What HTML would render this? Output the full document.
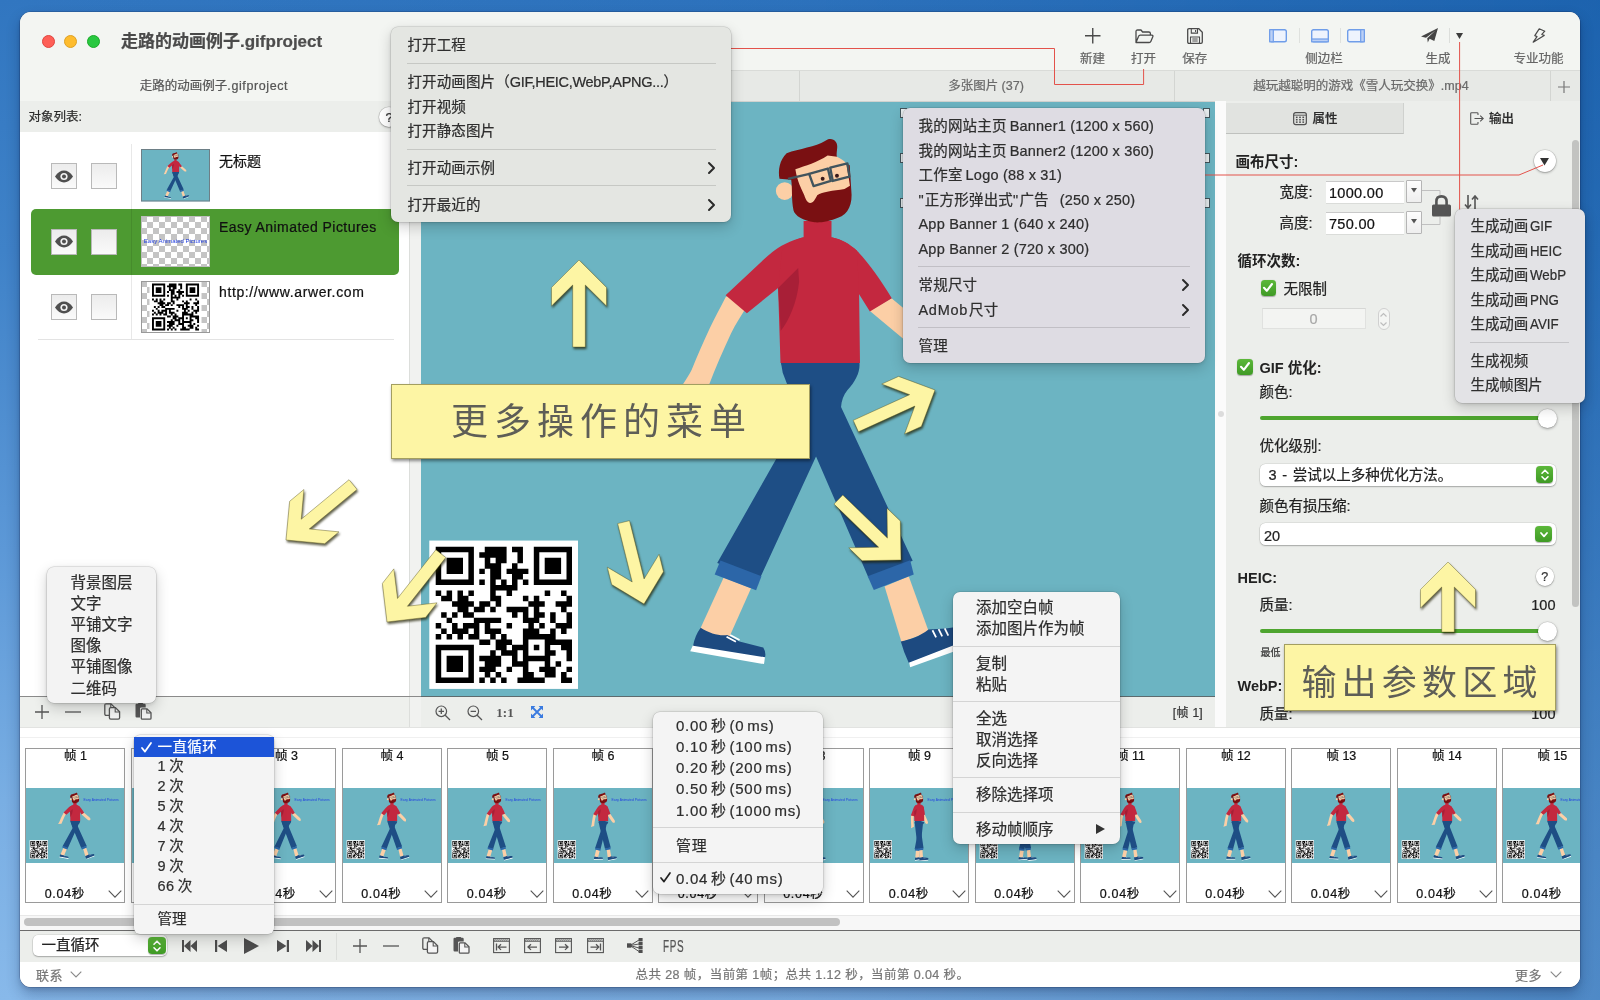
<!DOCTYPE html>
<html lang="zh"><head><meta charset="utf-8"><title>走路的动画例子.gifproject</title>
<style>
*{box-sizing:border-box;margin:0;padding:0}
html,body{width:1600px;height:1000px;overflow:hidden}
body{position:relative;font-family:"Liberation Sans","Noto Sans CJK SC",sans-serif;font-size:13px;color:#222;
background:linear-gradient(90deg,rgba(0,72,150,0) 0%,rgba(0,72,150,.1) 50%,rgba(0,72,150,.42) 100%),linear-gradient(180deg,#3176c0 0%,#3f82c8 25%,#5c98d7 55%,#79aee3 80%,#88b9ea 100%)}
.abs,.abs>*{position:absolute}
#win{position:absolute;left:20px;top:12px;width:1560px;height:975px;border-radius:11px;background:#eceeeb;overflow:hidden;
box-shadow:0 0 0 .5px rgba(0,0,30,.3),0 7px 14px rgba(5,25,70,.3),0 2px 5px rgba(5,25,70,.14)}
#win>*{position:absolute}
#win,#ov{will-change:transform}
.t{position:absolute;white-space:nowrap;line-height:1;transform:translateY(calc(-50% + .6px));-webkit-text-stroke:.22px currentColor}
.tc{transform:translate(-50%,calc(-50% + .6px))}
.tr{transform:translate(-100%,calc(-50% + .6px))}
.b{font-weight:bold;-webkit-text-stroke:0}
.menu{position:absolute;border-radius:7px;box-shadow:0 0 0 .5px rgba(0,0,0,.16),0 5px 14px rgba(0,0,0,.19),0 1px 4px rgba(0,0,0,.12)}
.menu .t{color:#2e2e2e}
.sep{position:absolute;height:1px;background:rgba(0,0,0,.13)}
.gbtn{position:absolute;border-radius:4px;background:linear-gradient(#5cb83a,#3f9a25);box-shadow:0 .5px 1px rgba(0,0,0,.3)}
.note{position:absolute;background:#fdf5a4;box-shadow:1px 2px 3px rgba(0,0,0,.45);color:#5e5e57;text-align:center;font-family:"Liberation Sans","Noto Sans CJK SC",sans-serif;font-weight:400;border:.5px solid rgba(90,85,40,.55)}
svg{position:absolute;overflow:visible}
.frame{position:absolute;top:748px;width:100px;height:155px;background:#fff;border:1px solid #9a9a9a}
.ico{stroke:#555;fill:none;stroke-width:1.3}
</style></head><body>
<div id="win">
<div style="left:0px;top:0px;width:1560px;height:58px;background:#f3f5f2"></div>
<div style="left:0px;top:58px;width:1560px;height:31.6px;background:#e7e9e6;border-top:1px solid #d9dbd8;border-bottom:1px solid #d0d2cf"></div>
<div style="left:0px;top:58px;width:389px;height:30.6px;background:#f3f5f2"></div>
<div style="left:389px;top:59px;width:1px;height:29.6px;background:#d3d5d2"></div>
<div style="left:779px;top:59px;width:1px;height:29.6px;background:#d3d5d2"></div>
<div style="left:1154px;top:59px;width:1px;height:29.6px;background:#d3d5d2"></div>
<div style="left:1530px;top:59px;width:1px;height:29.6px;background:#d3d5d2"></div>
<div style="left:21.5px;top:22.5px;width:13px;height:13px;border-radius:50%;background:#fe5f57;border:.5px solid #e0443e"></div>
<div style="left:44px;top:22.5px;width:13px;height:13px;border-radius:50%;background:#febc2e;border:.5px solid #dea123"></div>
<div style="left:66.5px;top:22.5px;width:13px;height:13px;border-radius:50%;background:#28c840;border:.5px solid #1aab29"></div>
<div class="t " style="left:101px;top:29px;font-size:17px;color:#4a4a4a"><span style="font-weight:700">走路的动画例子</span><span style="font-weight:700;color:#4c4c4c">.gifproject</span></div>
<div class="t tc" style="left:194px;top:74px;font-size:12.5px;color:#555">走路的动画例子<span style="letter-spacing:.6px">.gifproject</span></div>
<div class="t tc" style="left:966px;top:74px;font-size:12.5px;color:#6a6a6a">多张图片 (37)</div>
<div class="t tc" style="left:1341px;top:74px;font-size:12.5px;color:#6a6a6a">越玩越聪明的游戏《雪人玩交换》.mp4</div>
<svg style="left:1538px;top:69px" width="12" height="12"><path d="M6 0v12M0 6h12" stroke="#777" stroke-width="1.2"/></svg>
<div class="t tc" style="left:1072.5px;top:47px;font-size:12.5px;color:#666">新建</div>
<div class="t tc" style="left:1123.6px;top:47px;font-size:12.5px;color:#666">打开</div>
<div class="t tc" style="left:1174.7px;top:47px;font-size:12.5px;color:#666">保存</div>
<div class="t tc" style="left:1304px;top:47px;font-size:12.5px;color:#666">侧边栏</div>
<div class="t tc" style="left:1418px;top:47px;font-size:12.5px;color:#666">生成</div>
<div class="t tc" style="left:1518.5px;top:47px;font-size:12.5px;color:#666">专业功能</div>
<svg style="left:1065px;top:16px" width="15.5" height="15.5" viewBox="0 0 15.5 15.5" ><path d="M7.75 0v15.5M0 7.75h15.5" stroke="#4a4a4a" stroke-width="1.4" fill="none"/></svg>
<svg style="left:1114.5px;top:16.5px" width="19" height="15" viewBox="0 0 19 15" ><path d="M1 13.5V2.6Q1 1 2.6 1H6l1.6 2h6.2q1.6 0 1.6 1.6V6.2M1 13.5l2.6-6.2q.4-1.1 1.6-1.1h11.6q1.6 0 1 1.5l-2 4.8q-.4 1-1.6 1z" stroke="#4a4a4a" stroke-width="1.3" fill="none" stroke-linejoin="round"/></svg>
<svg style="left:1167px;top:16px" width="16" height="16" viewBox="0 0 16 16" ><path d="M.7 2Q.7.7 2 .7H11.8L15.3 4.2V14Q15.3 15.3 14 15.3H2Q.7 15.3.7 14z" stroke="#4a4a4a" stroke-width="1.3" fill="none"/><path d="M4.3.9v4.2h6.2V.9M8.6 2v2M3.5 15.2V9h9v6.2M5.3 11h5.4M5.3 13h5.4" stroke="#4a4a4a" stroke-width="1.1" fill="none"/></svg>
<svg style="left:1249px;top:17px" width="18" height="13.5" viewBox="0 0 18 13.5" ><rect x=".7" y=".7" width="16.6" height="12.1" rx="1.8" fill="#eef3fd" stroke="#6f9de9" stroke-width="1.4"/><rect x=".7" y=".7" width="3.6" height="12.1" fill="#bcd0f5" stroke="#6f9de9" stroke-width="1.2"/></svg>
<svg style="left:1290.5px;top:17px" width="18" height="13.5" viewBox="0 0 18 13.5" ><rect x=".7" y=".7" width="16.6" height="12.1" rx="1.8" fill="#eef3fd" stroke="#6f9de9" stroke-width="1.4"/><rect x=".7" y="10" width="16.6" height="2.8" fill="#bcd0f5" stroke="#6f9de9" stroke-width="1.2"/></svg>
<svg style="left:1327px;top:17px" width="18" height="13.5" viewBox="0 0 18 13.5" ><rect x=".7" y=".7" width="16.6" height="12.1" rx="1.8" fill="#eef3fd" stroke="#6f9de9" stroke-width="1.4"/><rect x="13.7" y=".7" width="3.6" height="12.1" fill="#bcd0f5" stroke="#6f9de9" stroke-width="1.2"/></svg>
<div style="left:1278.5px;top:16px;width:1px;height:15px;background:#dfe1de"></div>
<div style="left:1320px;top:16px;width:1px;height:15px;background:#dfe1de"></div>
<svg style="left:1400.5px;top:15.5px" width="17" height="15" viewBox="0 0 17 15" ><path d="M0 8.6L17 0 13.3 13 8.6 10.8 6.8 14.6 6.2 10.2 14.5 2.4 5 9.8z" fill="#454545"/></svg>
<div style="left:1429.3px;top:16px;width:1px;height:15px;background:#dcdedb"></div>
<svg style="left:1436px;top:21px" width="7" height="6" viewBox="0 0 7 6" ><path d="M0 0h7L3.5 6z" fill="#3c3c3c"/></svg>
<svg style="left:1512px;top:16px" width="14" height="15" viewBox="0 0 14 15" ><path d="M7.2.8L12.8 3.2 9.8 6.4 12.2 7.4 1.2 14.2 5 8.6 2.8 7.6z" fill="none" stroke="#4a4a4a" stroke-width="1.2" stroke-linejoin="round"/></svg>
<div style="left:0px;top:89px;width:389px;height:31px;background:#eceeeb"></div>
<div class="t " style="left:8.5px;top:105px;font-size:12.5px;color:#2a2a2a">对象列表:</div>
<div style="left:359px;top:95px;width:20px;height:20px;border-radius:50%;background:#fff;box-shadow:0 0 0 .5px rgba(0,0,0,.18),0 1px 2px rgba(0,0,0,.25)"></div>
<div class="t tc" style="left:369px;top:104.5px;font-size:13px;color:#333">?</div>
<div style="left:0px;top:120px;width:389px;height:564px;background:#fff"></div>
<div style="left:389px;top:89px;width:1px;height:626px;background:#dcdedb"></div>
<div style="left:390px;top:89px;width:11px;height:626px;background:#f1f2f0"></div>
<div style="left:0px;top:684px;width:401px;height:1px;background:#8a8a8a"></div>
<div style="left:0px;top:685px;width:389px;height:30px;background:#eef0ed"></div>
<div style="left:10.5px;top:197px;width:368px;height:65.5px;background:#4d9a31;border-radius:5px"></div>
<div style="left:111px;top:132px;width:1px;height:195px;background:rgba(0,0,0,.09)"></div>
<div style="left:18px;top:327px;width:356px;height:1px;background:#e3e3e3"></div>
<div style="left:31px;top:151px;width:26px;height:26px;background:linear-gradient(#ececec,#fafafa);border:1px solid #b9b9b9"></div>
<div style="left:71px;top:151px;width:26px;height:26px;background:linear-gradient(#ececec,#fafafa);border:1px solid #b9b9b9"></div>
<svg style="left:34px;top:157.5px" width="20" height="13" viewBox="0 0 20 13" ><path d="M1 6.5Q5 0.6 10 0.6T19 6.5Q15 12.4 10 12.4T1 6.5z" fill="#4f4f4f"/><circle cx="10" cy="6.5" r="3.6" fill="#f4f4f4"/><circle cx="10" cy="6.5" r="2" fill="#4f4f4f"/></svg>
<div class="t " style="left:199px;top:148.2px;font-size:14px;color:#111;letter-spacing:0px">无标题</div>
<div style="left:31px;top:216.5px;width:26px;height:26px;background:linear-gradient(#ececec,#fafafa);border:1px solid #b9b9b9"></div>
<div style="left:71px;top:216.5px;width:26px;height:26px;background:linear-gradient(#ececec,#fafafa);border:1px solid #b9b9b9"></div>
<svg style="left:34px;top:223px" width="20" height="13" viewBox="0 0 20 13" ><path d="M1 6.5Q5 0.6 10 0.6T19 6.5Q15 12.4 10 12.4T1 6.5z" fill="#4f4f4f"/><circle cx="10" cy="6.5" r="3.6" fill="#f4f4f4"/><circle cx="10" cy="6.5" r="2" fill="#4f4f4f"/></svg>
<div class="t " style="left:199px;top:213.7px;font-size:14px;color:#111;letter-spacing:0.45px">Easy Animated Pictures</div>
<div style="left:31px;top:282px;width:26px;height:26px;background:linear-gradient(#ececec,#fafafa);border:1px solid #b9b9b9"></div>
<div style="left:71px;top:282px;width:26px;height:26px;background:linear-gradient(#ececec,#fafafa);border:1px solid #b9b9b9"></div>
<svg style="left:34px;top:288.5px" width="20" height="13" viewBox="0 0 20 13" ><path d="M1 6.5Q5 0.6 10 0.6T19 6.5Q15 12.4 10 12.4T1 6.5z" fill="#4f4f4f"/><circle cx="10" cy="6.5" r="3.6" fill="#f4f4f4"/><circle cx="10" cy="6.5" r="2" fill="#4f4f4f"/></svg>
<div class="t " style="left:199px;top:279.2px;font-size:14px;color:#111;letter-spacing:0.62px">http://www.arwer.com</div>
<svg width="0" height="0" style="left:0;top:0"><defs>
<g id="legB" transform="translate(620 340) scale(.36)">
 <path d="M447 60L602 60L612 175L388 662L270 618L500 212L464 120L452 89Z" fill="#1e4e85"/>
 <path d="M288 658L364 688L300 832L222 803Z" fill="#fccfa6"/>
 <path d="M279 611L393 655L378 694L263 650Z" fill="#2c66a8"/>
 <path d="M203 846L403 878L400 899L195 863Z" fill="#fff"/>
 <path d="M224 798C250 815 280 822 298 818L332 836L398 853Q406 866 403 880L203 848Q208 820 224 798Z" fill="#1d4a80"/>
 <path d="M296 823l26 14M306 818l26 14" stroke="#fff" stroke-width="5"/>
</g><g id="legF" transform="translate(620 340) scale(.36)">
 <path d="M735 683L802 655L858 810L782 838Z" fill="#fccfa6"/>
 <path d="M803 893L985 822L990 842L806 908Z" fill="#fff"/>
 <path d="M780 836C805 832 832 822 857 803L905 800L975 790Q990 805 986 824L802 895Q788 866 780 836Z" fill="#1d4a80"/>
 <path d="M868 805l10 20M885 802l10 20M902 800l10 20" stroke="#fff" stroke-width="5"/>
 <path d="M447 60L665 60C668 85 655 112 632 137C621 150 615 168 614 184L813 612L690 658L485 184L447 60Z" fill="#1e4e85"/>
 <path d="M688 655L806 610L816 650L705 693Z" fill="#2c66a8"/>
</g><g id="armL" transform="translate(620 100) scale(.3)"><path d="M352 655Q372 636 392 648Q414 660 420 690C402 720 385 745 370 776C345 830 318 890 295 952L203 955C220 930 232 912 239 897C258 850 280 800 300 757C318 720 334 690 352 655Z" fill="#fccfa6"/><path d="M527 624L423 708L352 648L480 528C520 490 560 468 612 455L620 600Z" fill="#c3283f"/></g><g id="armR" transform="translate(620 100) scale(.3)"><path d="M832 700L905 658L1040 770Q1090 800 1075 850Q1040 870 1000 840Z" fill="#fccfa6"/><path d="M705 455C740 462 765 478 790 500C830 540 870 600 906 658L833 702L797 645L700 600Z" fill="#c3283f"/></g><g id="upper"><g transform="translate(620 100) scale(.3)">
 <path d="M612 400L705 400L705 455C740 462 765 478 790 500L797 645L800 874L535 874L527 624L540 500C560 475 585 462 612 455Z" fill="#c3283f"/>
 <path d="M594 557L527 624L536 767C562 734 590 673 597 603Z" fill="#a81f37"/>
</g>
<g transform="translate(760 120) scale(.13)">
 <circle cx="190" cy="540" r="68" fill="#fccfa6"/>
 <path d="M150 445C138 380 150 300 205 248C300 215 430 200 500 155C545 118 605 150 593 215C590 250 585 270 600 295L690 340L702 530C715 640 680 720 600 745C540 772 460 785 420 780C330 770 270 730 258 690C240 600 250 520 240 452Z" fill="#7a1012"/>
 <path d="M272 372C350 345 440 320 520 266L592 276C615 290 645 300 665 330L692 498L650 524C560 538 480 545 440 572C425 600 412 632 386 632C360 626 350 600 340 570C318 520 288 470 272 372Z" fill="#fccfa6"/>
 <g fill="none" stroke="#41545d" stroke-width="18" stroke-linejoin="round"><path d="M378 408L522 366L545 462L412 502Z"/><path d="M540 360L672 326L688 428L560 462Z"/><path d="M215 445L380 408"/></g>
 <circle cx="482" cy="445" r="15" fill="#3a1a1a"/><circle cx="592" cy="422" r="15" fill="#3a1a1a"/>
</g></g>
<g id="qrg"><rect x="429.3" y="540" width="148.7" height="148.5" fill="#fff"/><path d="M435.70 546.30h38.20v5.50h-38.20zM484.75 546.30h21.85v5.50h-21.85zM512.00 546.30h10.95v5.50h-10.95zM533.80 546.30h38.20v5.50h-38.20zM435.70 551.75h5.50v5.50h-5.50zM468.40 551.75h5.50v5.50h-5.50zM479.30 551.75h27.30v5.50h-27.30zM517.45 551.75h5.50v5.50h-5.50zM533.80 551.75h5.50v5.50h-5.50zM566.50 551.75h5.50v5.50h-5.50zM435.70 557.20h5.50v5.50h-5.50zM446.60 557.20h16.40v5.50h-16.40zM468.40 557.20h5.50v5.50h-5.50zM484.75 557.20h5.50v5.50h-5.50zM495.65 557.20h10.95v5.50h-10.95zM517.45 557.20h5.50v5.50h-5.50zM533.80 557.20h5.50v5.50h-5.50zM544.70 557.20h16.40v5.50h-16.40zM566.50 557.20h5.50v5.50h-5.50zM435.70 562.65h5.50v5.50h-5.50zM446.60 562.65h16.40v5.50h-16.40zM468.40 562.65h5.50v5.50h-5.50zM484.75 562.65h16.40v5.50h-16.40zM512.00 562.65h5.50v5.50h-5.50zM533.80 562.65h5.50v5.50h-5.50zM544.70 562.65h16.40v5.50h-16.40zM566.50 562.65h5.50v5.50h-5.50zM435.70 568.10h5.50v5.50h-5.50zM446.60 568.10h16.40v5.50h-16.40zM468.40 568.10h5.50v5.50h-5.50zM479.30 568.10h5.50v5.50h-5.50zM490.20 568.10h10.95v5.50h-10.95zM506.55 568.10h21.85v5.50h-21.85zM533.80 568.10h5.50v5.50h-5.50zM544.70 568.10h16.40v5.50h-16.40zM566.50 568.10h5.50v5.50h-5.50zM435.70 573.55h5.50v5.50h-5.50zM468.40 573.55h5.50v5.50h-5.50zM490.20 573.55h10.95v5.50h-10.95zM512.00 573.55h10.95v5.50h-10.95zM533.80 573.55h5.50v5.50h-5.50zM566.50 573.55h5.50v5.50h-5.50zM435.70 579.00h38.20v5.50h-38.20zM479.30 579.00h5.50v5.50h-5.50zM490.20 579.00h5.50v5.50h-5.50zM501.10 579.00h5.50v5.50h-5.50zM512.00 579.00h5.50v5.50h-5.50zM522.90 579.00h5.50v5.50h-5.50zM533.80 579.00h38.20v5.50h-38.20zM490.20 584.45h27.30v5.50h-27.30zM435.70 589.90h5.50v5.50h-5.50zM446.60 589.90h5.50v5.50h-5.50zM457.50 589.90h5.50v5.50h-5.50zM468.40 589.90h5.50v5.50h-5.50zM490.20 589.90h5.50v5.50h-5.50zM506.55 589.90h5.50v5.50h-5.50zM544.70 589.90h5.50v5.50h-5.50zM561.05 589.90h5.50v5.50h-5.50zM441.15 595.35h10.95v5.50h-10.95zM457.50 595.35h10.95v5.50h-10.95zM490.20 595.35h10.95v5.50h-10.95zM522.90 595.35h5.50v5.50h-5.50zM533.80 595.35h5.50v5.50h-5.50zM566.50 595.35h5.50v5.50h-5.50zM452.05 600.80h21.85v5.50h-21.85zM479.30 600.80h10.95v5.50h-10.95zM495.65 600.80h5.50v5.50h-5.50zM528.35 600.80h16.40v5.50h-16.40zM555.60 600.80h16.40v5.50h-16.40zM457.50 606.25h10.95v5.50h-10.95zM473.85 606.25h10.95v5.50h-10.95zM490.20 606.25h5.50v5.50h-5.50zM506.55 606.25h21.85v5.50h-21.85zM533.80 606.25h5.50v5.50h-5.50zM561.05 606.25h5.50v5.50h-5.50zM441.15 611.70h5.50v5.50h-5.50zM452.05 611.70h5.50v5.50h-5.50zM462.95 611.70h10.95v5.50h-10.95zM512.00 611.70h5.50v5.50h-5.50zM522.90 611.70h5.50v5.50h-5.50zM533.80 611.70h10.95v5.50h-10.95zM550.15 611.70h5.50v5.50h-5.50zM566.50 611.70h5.50v5.50h-5.50zM446.60 617.15h5.50v5.50h-5.50zM473.85 617.15h27.30v5.50h-27.30zM522.90 617.15h16.40v5.50h-16.40zM550.15 617.15h5.50v5.50h-5.50zM566.50 617.15h5.50v5.50h-5.50zM435.70 622.60h5.50v5.50h-5.50zM452.05 622.60h5.50v5.50h-5.50zM462.95 622.60h16.40v5.50h-16.40zM484.75 622.60h5.50v5.50h-5.50zM506.55 622.60h5.50v5.50h-5.50zM528.35 622.60h5.50v5.50h-5.50zM539.25 622.60h5.50v5.50h-5.50zM555.60 622.60h16.40v5.50h-16.40zM441.15 628.05h5.50v5.50h-5.50zM452.05 628.05h16.40v5.50h-16.40zM473.85 628.05h5.50v5.50h-5.50zM484.75 628.05h16.40v5.50h-16.40zM522.90 628.05h16.40v5.50h-16.40zM550.15 628.05h5.50v5.50h-5.50zM561.05 628.05h5.50v5.50h-5.50zM435.70 633.50h5.50v5.50h-5.50zM446.60 633.50h5.50v5.50h-5.50zM457.50 633.50h5.50v5.50h-5.50zM468.40 633.50h10.95v5.50h-10.95zM490.20 633.50h5.50v5.50h-5.50zM501.10 633.50h5.50v5.50h-5.50zM522.90 633.50h32.75v5.50h-32.75zM479.30 638.95h10.95v5.50h-10.95zM495.65 638.95h16.40v5.50h-16.40zM522.90 638.95h5.50v5.50h-5.50zM544.70 638.95h27.30v5.50h-27.30zM435.70 644.40h38.20v5.50h-38.20zM495.65 644.40h10.95v5.50h-10.95zM512.00 644.40h16.40v5.50h-16.40zM533.80 644.40h5.50v5.50h-5.50zM544.70 644.40h5.50v5.50h-5.50zM561.05 644.40h10.95v5.50h-10.95zM435.70 649.85h5.50v5.50h-5.50zM468.40 649.85h5.50v5.50h-5.50zM490.20 649.85h5.50v5.50h-5.50zM501.10 649.85h16.40v5.50h-16.40zM522.90 649.85h5.50v5.50h-5.50zM544.70 649.85h10.95v5.50h-10.95zM566.50 649.85h5.50v5.50h-5.50zM435.70 655.30h5.50v5.50h-5.50zM446.60 655.30h16.40v5.50h-16.40zM468.40 655.30h5.50v5.50h-5.50zM479.30 655.30h21.85v5.50h-21.85zM512.00 655.30h5.50v5.50h-5.50zM522.90 655.30h27.30v5.50h-27.30zM566.50 655.30h5.50v5.50h-5.50zM435.70 660.75h5.50v5.50h-5.50zM446.60 660.75h16.40v5.50h-16.40zM468.40 660.75h5.50v5.50h-5.50zM484.75 660.75h16.40v5.50h-16.40zM512.00 660.75h16.40v5.50h-16.40zM544.70 660.75h5.50v5.50h-5.50zM555.60 660.75h5.50v5.50h-5.50zM435.70 666.20h5.50v5.50h-5.50zM446.60 666.20h16.40v5.50h-16.40zM468.40 666.20h5.50v5.50h-5.50zM479.30 666.20h16.40v5.50h-16.40zM506.55 666.20h5.50v5.50h-5.50zM522.90 666.20h5.50v5.50h-5.50zM539.25 666.20h16.40v5.50h-16.40zM566.50 666.20h5.50v5.50h-5.50zM435.70 671.65h5.50v5.50h-5.50zM468.40 671.65h5.50v5.50h-5.50zM484.75 671.65h5.50v5.50h-5.50zM495.65 671.65h5.50v5.50h-5.50zM522.90 671.65h10.95v5.50h-10.95zM544.70 671.65h10.95v5.50h-10.95zM561.05 671.65h5.50v5.50h-5.50zM435.70 677.10h38.20v5.50h-38.20zM479.30 677.10h5.50v5.50h-5.50zM490.20 677.10h5.50v5.50h-5.50zM501.10 677.10h5.50v5.50h-5.50zM517.45 677.10h27.30v5.50h-27.30zM561.05 677.10h10.95v5.50h-10.95z" fill="#000"/></g>
<symbol id="man" viewBox="421 101 794 595" preserveAspectRatio="none"><rect x="421" y="101" width="794" height="595" fill="#6cb4c2"/><use href="#legB"/><use href="#legF"/><use href="#armR"/><use href="#armL"/><use href="#upper"/></symbol>
<symbol id="scene" viewBox="421 101 794 595" preserveAspectRatio="none"><use href="#man" x="421" y="101" width="794" height="595"/><use href="#qrg"/>
<text x="1054" y="172" font-family="Liberation Sans,sans-serif" font-size="27" fill="#2340e0" text-anchor="middle">Easy Animated Pictures</text>
</symbol>
<path id="arw" d="M0 0L27.5 27.5L27.5 46L6.3 25L6.3 87L-6.3 87L-6.3 25L-27.5 46L-27.5 27.5Z"/>
<path id="arws" d="M0 0L27.5 27.5L27.5 46L6.3 25L6.3 70L-6.3 70L-6.3 25L-27.5 46L-27.5 27.5Z"/>
<pattern id="chk" width="12" height="12" patternUnits="userSpaceOnUse"><rect width="12" height="12" fill="#fff"/><rect width="6" height="6" fill="#c4c4c4"/><rect x="6" y="6" width="6" height="6" fill="#c4c4c4"/></pattern>
</defs></svg>
<svg style="left:401px;top:89.6px" width="794" height="594.4"><use href="#scene" x="0" y="0" width="794" height="594.4"/></svg>
<div style="left:401px;top:684px;width:794px;height:1px;background:#5d6b6e"></div>
<div style="left:401px;top:685px;width:794px;height:30px;background:#eceeeb"></div>
<div style="left:1195px;top:89px;width:11px;height:626px;background:#fbfbfb"></div>
<div style="left:1206px;top:89px;width:354px;height:626px;background:#eceeeb"></div>
<div style="left:1206px;top:90.6px;width:178px;height:31.4px;background:#e1e3e0;border-bottom:1.5px solid #bfc1be;border-right:1px solid #cfd1ce"></div>
<svg style="left:1273px;top:99.7px" width="14" height="13.2" viewBox="0 0 14 13.2" ><rect x=".65" y=".65" width="12.7" height="11.9" rx="2" fill="none" stroke="#505050" stroke-width="1.2"/><path d="M1 3.2h12" stroke="#505050" stroke-width=".9"/><rect x="2.9" y="4.6" width="1.7" height="1.5" fill="#505050"/><rect x="2.9" y="7" width="1.7" height="1.5" fill="#505050"/><rect x="2.9" y="9.4" width="1.7" height="1.5" fill="#505050"/><rect x="6.15" y="4.6" width="1.7" height="1.5" fill="#505050"/><rect x="6.15" y="7" width="1.7" height="1.5" fill="#505050"/><rect x="6.15" y="9.4" width="1.7" height="1.5" fill="#505050"/><rect x="9.4" y="4.6" width="1.7" height="1.5" fill="#505050"/><rect x="9.4" y="7" width="1.7" height="1.5" fill="#505050"/><rect x="9.4" y="9.4" width="1.7" height="1.5" fill="#505050"/></svg>
<div class="t " style="left:1292.5px;top:107px;font-size:12.5px;color:#2c2c2c;font-weight:500">属性</div>
<svg style="left:1450px;top:99.5px" width="14" height="13" viewBox="0 0 14 13" ><path d="M8 3V1.6Q8 .7 7 .7H1.6Q.7.7.7 1.6V11.4Q.7 12.3 1.6 12.3H7Q8 12.3 8 11.4V10M4.5 6.5H13M10.2 3.6L13.2 6.5L10.2 9.4" fill="none" stroke="#555" stroke-width="1.1"/></svg>
<div class="t " style="left:1469px;top:107px;font-size:12.5px;color:#2c2c2c;font-weight:500">输出</div>
<div class="t b" style="left:1215.5px;top:149.5px;font-size:14.5px;color:#222">画布尺寸:</div>
<div style="left:1513.5px;top:138px;width:22px;height:22px;border-radius:50%;background:#fff;box-shadow:0 0 0 .5px rgba(0,0,0,.15),0 1px 2.5px rgba(0,0,0,.3)"></div>
<svg style="left:1520px;top:146px" width="9" height="7.5" viewBox="0 0 9 7.5" ><path d="M0 0h9L4.5 7.5z" fill="#333"/></svg>
<div class="t " style="left:1259.5px;top:180px;font-size:14.5px;color:#222">宽度:</div>
<div style="left:1305.5px;top:168.5px;width:78.5px;height:22.5px;background:#fff;border-top:1px solid #c9c9c9;box-shadow:0 .5px 0 rgba(0,0,0,.15)"></div>
<div class="t " style="left:1309px;top:180.5px;font-size:14.5px;color:#111;letter-spacing:.3px">1000.00</div>
<div style="left:1385.5px;top:168px;width:16px;height:23px;background:linear-gradient(#fdfdfd,#eee);border:1px solid #b5b5b5;border-radius:1px"></div>
<svg style="left:1390.5px;top:176px" width="6" height="4.5" viewBox="0 0 6 4.5" ><path d="M0 0h6L3 4.5z" fill="#555"/></svg>
<div class="t " style="left:1259.5px;top:211px;font-size:14.5px;color:#222">高度:</div>
<div style="left:1305.5px;top:199.5px;width:78.5px;height:22.5px;background:#fff;border-top:1px solid #c9c9c9;box-shadow:0 .5px 0 rgba(0,0,0,.15)"></div>
<div class="t " style="left:1309px;top:211.5px;font-size:14.5px;color:#111;letter-spacing:.3px">750.00</div>
<div style="left:1385.5px;top:199px;width:16px;height:23px;background:linear-gradient(#fdfdfd,#eee);border:1px solid #b5b5b5;border-radius:1px"></div>
<svg style="left:1390.5px;top:207px" width="6" height="4.5" viewBox="0 0 6 4.5" ><path d="M0 0h6L3 4.5z" fill="#555"/></svg>
<svg style="left:1402px;top:176.5px" width="30" height="40"><path d="M0 1.5H18V8M0 35.5H18V28" stroke="#c0c0c0" fill="none"/></svg>
<svg style="left:1411.5px;top:183px" width="19" height="22" viewBox="0 0 19 22" ><path d="M4.4 10V6.5Q4.4 1.4 9.5 1.4T14.6 6.5V10" fill="none" stroke="#555" stroke-width="2.6"/><rect x="0" y="9.5" width="19" height="12" rx="1.6" fill="#555"/></svg>
<svg style="left:1444px;top:182px" width="15" height="16" viewBox="0 0 15 16" ><path d="M4 1V13.5M1 10.5L4 14L7 10.5M11 15V2.5M8 5.5L11 2L14 5.5" fill="none" stroke="#555" stroke-width="1.6"/></svg>
<div class="t b" style="left:1217.5px;top:248.5px;font-size:14.5px;color:#222">循环次数:</div>
<div class="gbtn" style="left:1240.5px;top:268px;width:15.5px;height:15.5px;border-radius:3.5px"></div>
<svg style="left:1243.3px;top:271.2px" width="10" height="9" viewBox="0 0 10 9" ><path d="M1 4.8L3.8 7.8L9 1" fill="none" stroke="#fff" stroke-width="2.1" stroke-linecap="round" stroke-linejoin="round"/></svg>
<div class="t " style="left:1263.5px;top:276.5px;font-size:14.5px;color:#222">无限制</div>
<div style="left:1241.5px;top:295.5px;width:104.5px;height:21.5px;background:#f3f4f2;border:1px solid #e0e1df;border-top-color:#d6d7d5"></div>
<div class="t tc" style="left:1293.5px;top:307px;font-size:14.5px;color:#a8a8a8">0</div>
<div style="left:1357.5px;top:295.5px;width:12px;height:22px;border:1px solid #d0d0d0;border-radius:6px;background:#f4f5f3"></div>
<svg style="left:1360px;top:299.5px" width="7" height="15" viewBox="0 0 7 15" ><path d="M.5 4.5L3.5 1.5L6.5 4.5M.5 10.5L3.5 13.5L6.5 10.5" fill="none" stroke="#bdbdbd" stroke-width="1.2"/></svg>
<div class="gbtn" style="left:1217px;top:347px;width:15.5px;height:15.5px;border-radius:3.5px"></div>
<svg style="left:1219.8px;top:350.2px" width="10" height="9" viewBox="0 0 10 9" ><path d="M1 4.8L3.8 7.8L9 1" fill="none" stroke="#fff" stroke-width="2.1" stroke-linecap="round" stroke-linejoin="round"/></svg>
<div class="t b" style="left:1239.5px;top:355.5px;font-size:14.5px;color:#222">GIF 优化:</div>
<div class="t " style="left:1239.5px;top:380px;font-size:14.5px;color:#222">颜色:</div>
<div style="left:1239.5px;top:404px;width:285.5px;height:4px;background:#4ea52f;border-radius:2px"></div>
<div style="left:1518px;top:396.5px;width:19px;height:19px;border-radius:50%;background:#fff;box-shadow:0 0 0 .5px rgba(0,0,0,.12),0 1px 3px rgba(0,0,0,.35)"></div>
<div class="t " style="left:1239.5px;top:434px;font-size:14.5px;color:#222">优化级别:</div>
<div style="left:1239.5px;top:451.5px;width:296px;height:22px;background:#fff;border-radius:5.5px;box-shadow:0 0 0 .5px rgba(0,0,0,.12),0 1px 1.5px rgba(0,0,0,.25)"></div>
<div class="t " style="left:1248.5px;top:462.5px;font-size:14.5px;color:#222;word-spacing:1.6px">3 - 尝试以上多种优化方法。</div>
<div class="gbtn" style="left:1515.5px;top:454px;width:17.5px;height:17px"></div>
<svg style="left:1520.5px;top:456.5px" width="8" height="12" viewBox="0 0 8 12" ><path d="M1 4.2L4 1.2L7 4.2M1 7.8L4 10.8L7 7.8" fill="none" stroke="#fff" stroke-width="1.6" stroke-linecap="round" stroke-linejoin="round"/></svg>
<div class="t " style="left:1239.5px;top:493.5px;font-size:14.5px;color:#222">颜色有损压缩:</div>
<div style="left:1239.5px;top:511px;width:296px;height:22px;background:#fff;border-radius:5.5px;box-shadow:0 0 0 .5px rgba(0,0,0,.12),0 1px 1.5px rgba(0,0,0,.25)"></div>
<div class="t " style="left:1244px;top:524px;font-size:14.5px;color:#222">20</div>
<div class="gbtn" style="left:1515px;top:514px;width:17px;height:16px"></div>
<svg style="left:1519.5px;top:519.5px" width="8" height="6" viewBox="0 0 8 6" ><path d="M1 1L4 4.4L7 1" fill="none" stroke="#fff" stroke-width="1.8" stroke-linecap="round" stroke-linejoin="round"/></svg>
<div class="t b" style="left:1217.5px;top:565.5px;font-size:14.5px;color:#222">HEIC:</div>
<div style="left:1515.5px;top:555px;width:18.5px;height:18.5px;border-radius:50%;background:#fff;box-shadow:0 0 0 .5px rgba(0,0,0,.15),0 1px 2px rgba(0,0,0,.25)"></div>
<div class="t tc" style="left:1524.8px;top:564.5px;font-size:12.5px;color:#333">?</div>
<div class="t " style="left:1239.5px;top:593px;font-size:14.5px;color:#222">质量:</div>
<div class="t tr" style="left:1535.5px;top:593px;font-size:14.5px;color:#222">100</div>
<div style="left:1239.5px;top:617px;width:285.5px;height:4px;background:#4ea52f;border-radius:2px"></div>
<div style="left:1518px;top:609.5px;width:19px;height:19px;border-radius:50%;background:#fff;box-shadow:0 0 0 .5px rgba(0,0,0,.12),0 1px 3px rgba(0,0,0,.35)"></div>
<div class="t " style="left:1240.5px;top:640px;font-size:10px;color:#333">最低</div>
<div class="t b" style="left:1217.5px;top:674px;font-size:14.5px;color:#222">WebP:</div>
<div class="t " style="left:1239.5px;top:702px;font-size:14.5px;color:#222">质量:</div>
<div class="t tr" style="left:1535.5px;top:702px;font-size:14.5px;color:#222">100</div>
<div style="left:1552px;top:128px;width:7px;height:467px;background:#c2c3c1;border-radius:3.5px"></div>
<div style="left:1197.5px;top:398.5px;width:6.5px;height:6.5px;border-radius:50%;background:#dcdcdc"></div>
<svg style="left:14.5px;top:692.5px" width="14" height="14" viewBox="0 0 14 14" ><path d="M7 0v14M0 7h14" stroke="#555" stroke-width="1.3" fill="none"/></svg>
<svg style="left:45px;top:698.5px" width="16" height="2" viewBox="0 0 16 2" ><path d="M0 1h16" stroke="#555" stroke-width="1.3" fill="none"/></svg>
<svg style="left:83.5px;top:691px" width="18" height="17" viewBox="0 0 18 17" ><path d="M5 12.4H2.2Q.8 12.4 .8 11V2.2Q.8 .8 2.2 .8H7L10.8 4.6" fill="none" stroke="#555" stroke-width="1.3"/><path d="M6.8 1V4.8H10.6" fill="none" stroke="#555" stroke-width="1.1"/><path d="M5.4 6Q5.4 4.6 6.8 4.6H11.4L15.6 8.8V14.8Q15.6 16.2 14.2 16.2H6.8Q5.4 16.2 5.4 14.8Z" fill="#f4f4f4" stroke="#555" stroke-width="1.3"/><path d="M11.2 4.8V9H15.4" fill="none" stroke="#555" stroke-width="1.1"/></svg>
<svg style="left:115px;top:691px" width="17" height="17" viewBox="0 0 17 17" ><path d="M.5 2Q.5.8 1.7.8H9.5Q10.7.8 10.7 2V4.5H6.2Q5 4.5 5 5.7V14.5H1.7Q.5 14.5.5 13.3Z" fill="#555"/><rect x="3" y="0" width="5.2" height="2.6" rx=".8" fill="#555"/><path d="M6.3 6.8Q6.3 5.8 7.3 5.8H12L16 9.8V15.2Q16 16.2 15 16.2H7.3Q6.3 16.2 6.3 15.2Z" fill="#f4f4f4" stroke="#555" stroke-width="1.3"/><path d="M11.8 6V10H15.8" fill="none" stroke="#555" stroke-width="1.1"/></svg>
<svg style="left:415px;top:692.5px" width="16" height="16" viewBox="0 0 16 16" ><circle cx="6.3" cy="6.3" r="5.3" fill="none" stroke="#555" stroke-width="1.2"/><path d="M10.2 10.2L15 15M3.6 6.3H9M6.3 3.6V9" stroke="#555" stroke-width="1.3" fill="none"/></svg>
<svg style="left:446.5px;top:692.5px" width="16" height="16" viewBox="0 0 16 16" ><circle cx="6.3" cy="6.3" r="5.3" fill="none" stroke="#555" stroke-width="1.2"/><path d="M10.2 10.2L15 15M3.6 6.3H9" stroke="#555" stroke-width="1.3" fill="none"/></svg>
<div class="t tc b" style="left:485px;top:699.5px;font-size:13px;font-family:'Liberation Serif',serif;color:#555">1:1</div>
<svg style="left:510.5px;top:694px" width="12" height="12" viewBox="0 0 12 12" ><path d="M1 1L11 11M11 1L1 11" stroke="#3a7be0" stroke-width="1.8" fill="none"/><path d="M0 0H4.4L0 4.4ZM12 0V4.4L7.6 0ZM0 12V7.6L4.4 12ZM12 12H7.6L12 7.6Z" fill="#3a7be0"/></svg>
<div class="t tr" style="left:1183px;top:699.5px;font-size:12px;color:#333;letter-spacing:.3px">[帧 1]</div>
<div style="left:0px;top:715px;width:1560px;height:188px;background:#fff"></div>
<div style="left:0px;top:715px;width:1560px;height:1px;background:#e2e3e1"></div>
<div style="left:0px;top:725px;width:1560px;height:1px;background:#f0f0f0"></div>
<div style="left:0px;top:903px;width:1560px;height:15px;background:#f7f7f7;border-top:1px solid #e8e8e8"></div>
<div style="left:4px;top:906px;width:816px;height:8px;background:#c1c1c1;border-radius:4px"></div>
<div style="left:0px;top:918px;width:1560px;height:1px;background:#6b6b6b"></div>
<div style="left:0px;top:919px;width:1560px;height:31px;background:#eceeeb"></div>
<div style="left:0px;top:950px;width:1560px;height:25px;background:#fff"></div>
<div class="frame" style="left:5.4px;top:736px"></div>
<div class="t tc" style="left:55.4px;top:743.5px;font-size:12.5px;color:#111">帧 1</div>
<svg style="left:6.4px;top:776.3px" width="98" height="75" viewBox="421 101 794 595" preserveAspectRatio="none"><rect x="421" y="101" width="794" height="595" fill="#6cb4c2"/><use href="#legB" transform="rotate(0 820 372)"/><use href="#legF" transform="rotate(0 820 372)"/><use href="#armR" transform="rotate(0 845 250)"/><use href="#armL" transform="rotate(0 790 250)"/><use href="#upper"/><use href="#qrg" transform="translate(21 -25)"/><text x="1030" y="205" font-family="Liberation Sans,sans-serif" font-size="27" fill="#2340e0" text-anchor="middle">Easy Animated Pictures</text></svg>
<div class="t tc" style="left:44.9px;top:881.5px;font-size:12.5px;color:#111;letter-spacing:.7px">0.04秒</div>
<svg style="left:87.9px;top:877.5px" width="14" height="8" viewBox="0 0 14 8" ><path d="M.7 .7L7 7.2L13.3 .7" fill="none" stroke="#555" stroke-width="1.1"/></svg>
<div class="frame" style="left:110.9px;top:736px"></div>
<div class="t tc" style="left:160.9px;top:743.5px;font-size:12.5px;color:#111">帧 2</div>
<svg style="left:111.9px;top:776.3px" width="98" height="75" viewBox="421 101 794 595" preserveAspectRatio="none"><rect x="421" y="101" width="794" height="595" fill="#6cb4c2"/><use href="#legB" transform="rotate(-1.05 820 372)"/><use href="#legF" transform="rotate(0.945 820 372)"/><use href="#armR" transform="rotate(1.5 845 250)"/><use href="#armL" transform="rotate(-1.5 790 250)"/><use href="#upper"/><use href="#qrg" transform="translate(21 -25)"/><text x="1030" y="205" font-family="Liberation Sans,sans-serif" font-size="27" fill="#2340e0" text-anchor="middle">Easy Animated Pictures</text></svg>
<div class="t tc" style="left:150.4px;top:881.5px;font-size:12.5px;color:#111;letter-spacing:.7px">0.04秒</div>
<svg style="left:193.4px;top:877.5px" width="14" height="8" viewBox="0 0 14 8" ><path d="M.7 .7L7 7.2L13.3 .7" fill="none" stroke="#555" stroke-width="1.1"/></svg>
<div class="frame" style="left:216.4px;top:736px"></div>
<div class="t tc" style="left:266.4px;top:743.5px;font-size:12.5px;color:#111">帧 3</div>
<svg style="left:217.4px;top:776.3px" width="98" height="75" viewBox="421 101 794 595" preserveAspectRatio="none"><rect x="421" y="101" width="794" height="595" fill="#6cb4c2"/><use href="#legB" transform="rotate(-2.1 820 372)"/><use href="#legF" transform="rotate(1.89 820 372)"/><use href="#armR" transform="rotate(3 845 250)"/><use href="#armL" transform="rotate(-3 790 250)"/><use href="#upper"/><use href="#qrg" transform="translate(21 -25)"/><text x="1030" y="205" font-family="Liberation Sans,sans-serif" font-size="27" fill="#2340e0" text-anchor="middle">Easy Animated Pictures</text></svg>
<div class="t tc" style="left:255.9px;top:881.5px;font-size:12.5px;color:#111;letter-spacing:.7px">0.04秒</div>
<svg style="left:298.9px;top:877.5px" width="14" height="8" viewBox="0 0 14 8" ><path d="M.7 .7L7 7.2L13.3 .7" fill="none" stroke="#555" stroke-width="1.1"/></svg>
<div class="frame" style="left:321.9px;top:736px"></div>
<div class="t tc" style="left:371.9px;top:743.5px;font-size:12.5px;color:#111">帧 4</div>
<svg style="left:322.9px;top:776.3px" width="98" height="75" viewBox="421 101 794 595" preserveAspectRatio="none"><rect x="421" y="101" width="794" height="595" fill="#6cb4c2"/><use href="#legB" transform="rotate(-4.2 820 372)"/><use href="#legF" transform="rotate(3.78 820 372)"/><use href="#armR" transform="rotate(6 845 250)"/><use href="#armL" transform="rotate(-6 790 250)"/><use href="#upper"/><use href="#qrg" transform="translate(21 -25)"/><text x="1030" y="205" font-family="Liberation Sans,sans-serif" font-size="27" fill="#2340e0" text-anchor="middle">Easy Animated Pictures</text></svg>
<div class="t tc" style="left:361.4px;top:881.5px;font-size:12.5px;color:#111;letter-spacing:.7px">0.04秒</div>
<svg style="left:404.4px;top:877.5px" width="14" height="8" viewBox="0 0 14 8" ><path d="M.7 .7L7 7.2L13.3 .7" fill="none" stroke="#555" stroke-width="1.1"/></svg>
<div class="frame" style="left:427.4px;top:736px"></div>
<div class="t tc" style="left:477.4px;top:743.5px;font-size:12.5px;color:#111">帧 5</div>
<svg style="left:428.4px;top:776.3px" width="98" height="75" viewBox="421 101 794 595" preserveAspectRatio="none"><rect x="421" y="101" width="794" height="595" fill="#6cb4c2"/><use href="#legB" transform="rotate(-7.35 820 372)"/><use href="#legF" transform="rotate(6.615 820 372)"/><use href="#armR" transform="rotate(10.5 845 250)"/><use href="#armL" transform="rotate(-10.5 790 250)"/><use href="#upper"/><use href="#qrg" transform="translate(21 -25)"/><text x="1030" y="205" font-family="Liberation Sans,sans-serif" font-size="27" fill="#2340e0" text-anchor="middle">Easy Animated Pictures</text></svg>
<div class="t tc" style="left:466.9px;top:881.5px;font-size:12.5px;color:#111;letter-spacing:.7px">0.04秒</div>
<svg style="left:509.9px;top:877.5px" width="14" height="8" viewBox="0 0 14 8" ><path d="M.7 .7L7 7.2L13.3 .7" fill="none" stroke="#555" stroke-width="1.1"/></svg>
<div class="frame" style="left:532.9px;top:736px"></div>
<div class="t tc" style="left:582.9px;top:743.5px;font-size:12.5px;color:#111">帧 6</div>
<svg style="left:533.9px;top:776.3px" width="98" height="75" viewBox="421 101 794 595" preserveAspectRatio="none"><rect x="421" y="101" width="794" height="595" fill="#6cb4c2"/><use href="#legB" transform="rotate(-10.5 820 372)"/><use href="#legF" transform="rotate(9.45 820 372)"/><use href="#armR" transform="rotate(15 845 250)"/><use href="#armL" transform="rotate(-15 790 250)"/><use href="#upper"/><use href="#qrg" transform="translate(21 -25)"/><text x="1030" y="205" font-family="Liberation Sans,sans-serif" font-size="27" fill="#2340e0" text-anchor="middle">Easy Animated Pictures</text></svg>
<div class="t tc" style="left:572.4px;top:881.5px;font-size:12.5px;color:#111;letter-spacing:.7px">0.04秒</div>
<svg style="left:615.4px;top:877.5px" width="14" height="8" viewBox="0 0 14 8" ><path d="M.7 .7L7 7.2L13.3 .7" fill="none" stroke="#555" stroke-width="1.1"/></svg>
<div class="frame" style="left:638.4px;top:736px"></div>
<div class="t tc" style="left:688.4px;top:743.5px;font-size:12.5px;color:#111">帧 7</div>
<svg style="left:639.4px;top:776.3px" width="98" height="75" viewBox="421 101 794 595" preserveAspectRatio="none"><rect x="421" y="101" width="794" height="595" fill="#6cb4c2"/><use href="#legB" transform="rotate(-12.6 820 372)"/><use href="#legF" transform="rotate(11.34 820 372)"/><use href="#armR" transform="rotate(18 845 250)"/><use href="#armL" transform="rotate(-18 790 250)"/><use href="#upper"/><use href="#qrg" transform="translate(21 -25)"/><text x="1030" y="205" font-family="Liberation Sans,sans-serif" font-size="27" fill="#2340e0" text-anchor="middle">Easy Animated Pictures</text></svg>
<div class="t tc" style="left:677.9px;top:881.5px;font-size:12.5px;color:#111;letter-spacing:.7px">0.04秒</div>
<svg style="left:720.9px;top:877.5px" width="14" height="8" viewBox="0 0 14 8" ><path d="M.7 .7L7 7.2L13.3 .7" fill="none" stroke="#555" stroke-width="1.1"/></svg>
<div class="frame" style="left:743.9px;top:736px"></div>
<div class="t tc" style="left:793.9px;top:743.5px;font-size:12.5px;color:#111">帧 8</div>
<svg style="left:744.9px;top:776.3px" width="98" height="75" viewBox="421 101 794 595" preserveAspectRatio="none"><rect x="421" y="101" width="794" height="595" fill="#6cb4c2"/><use href="#legB" transform="rotate(-14.7 820 372)"/><use href="#legF" transform="rotate(13.23 820 372)"/><use href="#armR" transform="rotate(21 845 250)"/><use href="#armL" transform="rotate(-21 790 250)"/><use href="#upper"/><use href="#qrg" transform="translate(21 -25)"/><text x="1030" y="205" font-family="Liberation Sans,sans-serif" font-size="27" fill="#2340e0" text-anchor="middle">Easy Animated Pictures</text></svg>
<div class="t tc" style="left:783.4px;top:881.5px;font-size:12.5px;color:#111;letter-spacing:.7px">0.04秒</div>
<svg style="left:826.4px;top:877.5px" width="14" height="8" viewBox="0 0 14 8" ><path d="M.7 .7L7 7.2L13.3 .7" fill="none" stroke="#555" stroke-width="1.1"/></svg>
<div class="frame" style="left:849.4px;top:736px"></div>
<div class="t tc" style="left:899.4px;top:743.5px;font-size:12.5px;color:#111">帧 9</div>
<svg style="left:850.4px;top:776.3px" width="98" height="75" viewBox="421 101 794 595" preserveAspectRatio="none"><rect x="421" y="101" width="794" height="595" fill="#6cb4c2"/><use href="#legB" transform="rotate(-18.48 820 372)"/><use href="#legF" transform="rotate(16.632 820 372)"/><use href="#armR" transform="rotate(26.4 845 250)"/><use href="#armL" transform="rotate(-26.4 790 250)"/><use href="#upper"/><use href="#qrg" transform="translate(21 -25)"/><text x="1030" y="205" font-family="Liberation Sans,sans-serif" font-size="27" fill="#2340e0" text-anchor="middle">Easy Animated Pictures</text></svg>
<div class="t tc" style="left:888.9px;top:881.5px;font-size:12.5px;color:#111;letter-spacing:.7px">0.04秒</div>
<svg style="left:931.9px;top:877.5px" width="14" height="8" viewBox="0 0 14 8" ><path d="M.7 .7L7 7.2L13.3 .7" fill="none" stroke="#555" stroke-width="1.1"/></svg>
<div class="frame" style="left:954.9px;top:736px"></div>
<div class="t tc" style="left:1004.9px;top:743.5px;font-size:12.5px;color:#111">帧 10</div>
<svg style="left:955.9px;top:776.3px" width="98" height="75" viewBox="421 101 794 595" preserveAspectRatio="none"><rect x="421" y="101" width="794" height="595" fill="#6cb4c2"/><use href="#legB" transform="rotate(-14.7 820 372)"/><use href="#legF" transform="rotate(13.23 820 372)"/><use href="#armR" transform="rotate(21 845 250)"/><use href="#armL" transform="rotate(-21 790 250)"/><use href="#upper"/><use href="#qrg" transform="translate(21 -25)"/><text x="1030" y="205" font-family="Liberation Sans,sans-serif" font-size="27" fill="#2340e0" text-anchor="middle">Easy Animated Pictures</text></svg>
<div class="t tc" style="left:994.4px;top:881.5px;font-size:12.5px;color:#111;letter-spacing:.7px">0.04秒</div>
<svg style="left:1037.4px;top:877.5px" width="14" height="8" viewBox="0 0 14 8" ><path d="M.7 .7L7 7.2L13.3 .7" fill="none" stroke="#555" stroke-width="1.1"/></svg>
<div class="frame" style="left:1060.4px;top:736px"></div>
<div class="t tc" style="left:1110.4px;top:743.5px;font-size:12.5px;color:#111">帧 11</div>
<svg style="left:1061.4px;top:776.3px" width="98" height="75" viewBox="421 101 794 595" preserveAspectRatio="none"><rect x="421" y="101" width="794" height="595" fill="#6cb4c2"/><use href="#legB" transform="rotate(-11.55 820 372)"/><use href="#legF" transform="rotate(10.395 820 372)"/><use href="#armR" transform="rotate(16.5 845 250)"/><use href="#armL" transform="rotate(-16.5 790 250)"/><use href="#upper"/><use href="#qrg" transform="translate(21 -25)"/></svg>
<div class="t tc" style="left:1099.9px;top:881.5px;font-size:12.5px;color:#111;letter-spacing:.7px">0.04秒</div>
<svg style="left:1142.9px;top:877.5px" width="14" height="8" viewBox="0 0 14 8" ><path d="M.7 .7L7 7.2L13.3 .7" fill="none" stroke="#555" stroke-width="1.1"/></svg>
<div class="frame" style="left:1165.9px;top:736px"></div>
<div class="t tc" style="left:1215.9px;top:743.5px;font-size:12.5px;color:#111">帧 12</div>
<svg style="left:1166.9px;top:776.3px" width="98" height="75" viewBox="421 101 794 595" preserveAspectRatio="none"><rect x="421" y="101" width="794" height="595" fill="#6cb4c2"/><use href="#legB" transform="rotate(-9.45 820 372)"/><use href="#legF" transform="rotate(8.505 820 372)"/><use href="#armR" transform="rotate(13.5 845 250)"/><use href="#armL" transform="rotate(-13.5 790 250)"/><use href="#upper"/><use href="#qrg" transform="translate(21 -25)"/></svg>
<div class="t tc" style="left:1205.4px;top:881.5px;font-size:12.5px;color:#111;letter-spacing:.7px">0.04秒</div>
<svg style="left:1248.4px;top:877.5px" width="14" height="8" viewBox="0 0 14 8" ><path d="M.7 .7L7 7.2L13.3 .7" fill="none" stroke="#555" stroke-width="1.1"/></svg>
<div class="frame" style="left:1271.4px;top:736px"></div>
<div class="t tc" style="left:1321.4px;top:743.5px;font-size:12.5px;color:#111">帧 13</div>
<svg style="left:1272.4px;top:776.3px" width="98" height="75" viewBox="421 101 794 595" preserveAspectRatio="none"><rect x="421" y="101" width="794" height="595" fill="#6cb4c2"/><use href="#legB" transform="rotate(-6.3 820 372)"/><use href="#legF" transform="rotate(5.67 820 372)"/><use href="#armR" transform="rotate(9 845 250)"/><use href="#armL" transform="rotate(-9 790 250)"/><use href="#upper"/><use href="#qrg" transform="translate(21 -25)"/></svg>
<div class="t tc" style="left:1310.9px;top:881.5px;font-size:12.5px;color:#111;letter-spacing:.7px">0.04秒</div>
<svg style="left:1353.9px;top:877.5px" width="14" height="8" viewBox="0 0 14 8" ><path d="M.7 .7L7 7.2L13.3 .7" fill="none" stroke="#555" stroke-width="1.1"/></svg>
<div class="frame" style="left:1376.9px;top:736px"></div>
<div class="t tc" style="left:1426.9px;top:743.5px;font-size:12.5px;color:#111">帧 14</div>
<svg style="left:1377.9px;top:776.3px" width="98" height="75" viewBox="421 101 794 595" preserveAspectRatio="none"><rect x="421" y="101" width="794" height="595" fill="#6cb4c2"/><use href="#legB" transform="rotate(-3.15 820 372)"/><use href="#legF" transform="rotate(2.835 820 372)"/><use href="#armR" transform="rotate(4.5 845 250)"/><use href="#armL" transform="rotate(-4.5 790 250)"/><use href="#upper"/><use href="#qrg" transform="translate(21 -25)"/></svg>
<div class="t tc" style="left:1416.4px;top:881.5px;font-size:12.5px;color:#111;letter-spacing:.7px">0.04秒</div>
<svg style="left:1459.4px;top:877.5px" width="14" height="8" viewBox="0 0 14 8" ><path d="M.7 .7L7 7.2L13.3 .7" fill="none" stroke="#555" stroke-width="1.1"/></svg>
<div class="frame" style="left:1482.4px;top:736px"></div>
<div class="t tc" style="left:1532.4px;top:743.5px;font-size:12.5px;color:#111">帧 15</div>
<svg style="left:1483.4px;top:776.3px" width="98" height="75" viewBox="421 101 794 595" preserveAspectRatio="none"><rect x="421" y="101" width="794" height="595" fill="#6cb4c2"/><use href="#legB" transform="rotate(-1.05 820 372)"/><use href="#legF" transform="rotate(0.945 820 372)"/><use href="#armR" transform="rotate(1.5 845 250)"/><use href="#armL" transform="rotate(-1.5 790 250)"/><use href="#upper"/><use href="#qrg" transform="translate(21 -25)"/><text x="1030" y="205" font-family="Liberation Sans,sans-serif" font-size="27" fill="#2340e0" text-anchor="middle">Easy Animated Pictures</text></svg>
<div class="t tc" style="left:1521.9px;top:881.5px;font-size:12.5px;color:#111;letter-spacing:.7px">0.04秒</div>
<svg style="left:1564.9px;top:877.5px" width="14" height="8" viewBox="0 0 14 8" ><path d="M.7 .7L7 7.2L13.3 .7" fill="none" stroke="#555" stroke-width="1.1"/></svg>
<div style="left:12.5px;top:923px;width:134.5px;height:20.5px;background:#fff;border-radius:5px;box-shadow:0 0 0 .5px rgba(0,0,0,.12),0 1px 1.5px rgba(0,0,0,.25)"></div>
<div class="t " style="left:21.5px;top:933px;font-size:14.5px;color:#222">一直循环</div>
<div class="gbtn" style="left:127.5px;top:925px;width:18px;height:17px"></div>
<svg style="left:132.5px;top:927.5px" width="8" height="12" viewBox="0 0 8 12" ><path d="M1 4.2L4 1.2L7 4.2M1 7.8L4 10.8L7 7.8" fill="none" stroke="#fff" stroke-width="1.6" stroke-linecap="round" stroke-linejoin="round"/></svg>
<svg style="left:162px;top:927.5px" width="15" height="12" viewBox="0 0 15 12" ><path d="M0 0h2v12h-2zM8.5 0v12L2 6zM15 0v12L8.5 6z" fill="#4d4d4d"/></svg>
<svg style="left:194.5px;top:927.5px" width="12" height="12" viewBox="0 0 12 12" ><path d="M0 0h2.2v12h-2.2zM12 0v12L2.6 6z" fill="#4d4d4d"/></svg>
<svg style="left:224px;top:925.5px" width="15" height="16" viewBox="0 0 15 16" ><path d="M0 0L15 8L0 16z" fill="#4d4d4d"/></svg>
<svg style="left:256.5px;top:927.5px" width="12" height="12" viewBox="0 0 12 12" ><path d="M12 0h-2.2v12h2.2zM0 0v12L9.4 6z" fill="#4d4d4d"/></svg>
<svg style="left:286px;top:927.5px" width="15" height="12" viewBox="0 0 15 12" ><path d="M15 0h-2v12h2zM6.5 0v12L13 6zM0 0v12L6.5 6z" fill="#4d4d4d"/></svg>
<div style="left:316px;top:921px;width:1px;height:27px;background:#dcdedb"></div>
<svg style="left:332.5px;top:926.5px" width="14" height="14" viewBox="0 0 14 14" ><path d="M7 0v14M0 7h14" stroke="#555" stroke-width="1.3" fill="none"/></svg>
<svg style="left:362.5px;top:932.5px" width="16" height="2" viewBox="0 0 16 2" ><path d="M0 1h16" stroke="#555" stroke-width="1.3" fill="none"/></svg>
<svg style="left:401.5px;top:925px" width="18" height="17" viewBox="0 0 18 17" ><path d="M5 12.4H2.2Q.8 12.4 .8 11V2.2Q.8 .8 2.2 .8H7L10.8 4.6" fill="none" stroke="#555" stroke-width="1.3"/><path d="M6.8 1V4.8H10.6" fill="none" stroke="#555" stroke-width="1.1"/><path d="M5.4 6Q5.4 4.6 6.8 4.6H11.4L15.6 8.8V14.8Q15.6 16.2 14.2 16.2H6.8Q5.4 16.2 5.4 14.8Z" fill="#f4f4f4" stroke="#555" stroke-width="1.3"/><path d="M11.2 4.8V9H15.4" fill="none" stroke="#555" stroke-width="1.1"/></svg>
<svg style="left:433px;top:925px" width="17" height="17" viewBox="0 0 17 17" ><path d="M.5 2Q.5.8 1.7.8H9.5Q10.7.8 10.7 2V4.5H6.2Q5 4.5 5 5.7V14.5H1.7Q.5 14.5.5 13.3Z" fill="#555"/><rect x="3" y="0" width="5.2" height="2.6" rx=".8" fill="#555"/><path d="M6.3 6.8Q6.3 5.8 7.3 5.8H12L16 9.8V15.2Q16 16.2 15 16.2H7.3Q6.3 16.2 6.3 15.2Z" fill="#f4f4f4" stroke="#555" stroke-width="1.3"/><path d="M11.8 6V10H15.8" fill="none" stroke="#555" stroke-width="1.1"/></svg>
<svg style="left:473px;top:926px" width="17" height="15.2" viewBox="0 0 17 15.2" ><rect x=".6" y=".6" width="15.8" height="14" fill="none" stroke="#555" stroke-width="1.1"/><path d="M.6 3.2H16.4" stroke="#555" stroke-width="1.1"/><path d="M2.5 .8l-1 2M4.5 .8l-1 2M6.5 .8l-1 2M8.5 .8l-1 2M10.5 .8l-1 2M12.5 .8l-1 2M14.5 .8l-1 2" stroke="#555" stroke-width=".7"/><path d="M3.5 5.6V12.6M13.5 9.1H5.2M8 6.3L5.2 9.1L8 11.9" fill="none" stroke="#555" stroke-width="1.3"/></svg>
<svg style="left:504.25px;top:926px" width="17" height="15.2" viewBox="0 0 17 15.2" ><rect x=".6" y=".6" width="15.8" height="14" fill="none" stroke="#555" stroke-width="1.1"/><path d="M.6 3.2H16.4" stroke="#555" stroke-width="1.1"/><path d="M2.5 .8l-1 2M4.5 .8l-1 2M6.5 .8l-1 2M8.5 .8l-1 2M10.5 .8l-1 2M12.5 .8l-1 2M14.5 .8l-1 2" stroke="#555" stroke-width=".7"/><path d="M13 9.1H4M7 6.3L4 9.1L7 11.9" fill="none" stroke="#555" stroke-width="1.3"/></svg>
<svg style="left:535.25px;top:926px" width="17" height="15.2" viewBox="0 0 17 15.2" ><rect x=".6" y=".6" width="15.8" height="14" fill="none" stroke="#555" stroke-width="1.1"/><path d="M.6 3.2H16.4" stroke="#555" stroke-width="1.1"/><path d="M2.5 .8l-1 2M4.5 .8l-1 2M6.5 .8l-1 2M8.5 .8l-1 2M10.5 .8l-1 2M12.5 .8l-1 2M14.5 .8l-1 2" stroke="#555" stroke-width=".7"/><path d="M4 9.1H13M10 6.3L13 9.1L10 11.9" fill="none" stroke="#555" stroke-width="1.3"/></svg>
<svg style="left:566.5px;top:926px" width="17" height="15.2" viewBox="0 0 17 15.2" ><rect x=".6" y=".6" width="15.8" height="14" fill="none" stroke="#555" stroke-width="1.1"/><path d="M.6 3.2H16.4" stroke="#555" stroke-width="1.1"/><path d="M2.5 .8l-1 2M4.5 .8l-1 2M6.5 .8l-1 2M8.5 .8l-1 2M10.5 .8l-1 2M12.5 .8l-1 2M14.5 .8l-1 2" stroke="#555" stroke-width=".7"/><path d="M13.5 5.6V12.6M3.5 9.1H11.8M9 6.3L11.8 9.1L9 11.9" fill="none" stroke="#555" stroke-width="1.3"/></svg>
<svg style="left:607px;top:926px" width="16" height="15" viewBox="0 0 16 15" ><path d="M3 7.5L12 2M3 7.5L12 6M3 7.5L12 10M3 7.5L12 13.5" stroke="#555" stroke-width="1" fill="none"/><rect x="0" y="5.3" width="4.4" height="4.4" fill="#4d4d4d"/><rect x="11.6" y="0" width="4" height="3.4" fill="#4d4d4d"/><rect x="11.6" y="4" width="4" height="3.4" fill="#4d4d4d"/><rect x="11.6" y="8" width="4" height="3.4" fill="#4d4d4d"/><rect x="11.6" y="12" width="4" height="3" fill="#4d4d4d"/></svg>
<div class="t" style="left:642.5px;top:934.5px;font-size:16px;color:#555;transform:translateY(-50%) scaleX(.62);transform-origin:0 50%;letter-spacing:1px">FPS</div>
<div class="t " style="left:16px;top:962.5px;font-size:13px;color:#777;letter-spacing:.5px">联系</div>
<svg style="left:49.5px;top:959px" width="12" height="7" viewBox="0 0 12 7" ><path d="M.7 .7L6 6L11.3 .7" fill="none" stroke="#888" stroke-width="1.1"/></svg>
<div class="t " style="left:615.5px;top:963px;font-size:12.5px;color:#777;letter-spacing:.42px">总共 28 帧，当前第 1帧；总共 1.12 秒，当前第 0.04 秒。</div>
<div class="t " style="left:1495px;top:962.5px;font-size:13px;color:#777;letter-spacing:.5px">更多</div>
<svg style="left:1530px;top:959px" width="12" height="7" viewBox="0 0 12 7" ><path d="M.7 .7L6 6L11.3 .7" fill="none" stroke="#888" stroke-width="1.1"/></svg>
<svg style="left:121px;top:137px" width="69" height="52.5"><use href="#man" x="0" y="0" width="69" height="52.5"/><rect x=".5" y=".5" width="68" height="51.5" fill="none" stroke="#6d7f86"/></svg>
<svg style="left:121px;top:204px" width="69" height="51"><rect width="69" height="51" fill="url(#chk)"/><rect x=".5" y=".5" width="68" height="50" fill="none" stroke="#bdbdbd"/><text x="34.5" y="27.3" font-family="Liberation Sans,sans-serif" font-size="6" fill="#2340e0" text-anchor="middle">Easy Animated Pictures</text></svg>
<svg style="left:121px;top:268.5px" width="69" height="52"><rect width="69" height="52" fill="url(#chk)"/><rect x="8.5" y="0" width="52" height="52" fill="#fff"/><path d="M11.00 2.50h13.21v1.93h-13.21zM27.92 2.50h7.57v1.93h-7.57zM37.32 2.50h3.81v1.93h-3.81zM44.84 2.50h13.21v1.93h-13.21zM11.00 4.38h1.93v1.93h-1.93zM22.28 4.38h1.93v1.93h-1.93zM26.04 4.38h9.45v1.93h-9.45zM39.20 4.38h1.93v1.93h-1.93zM44.84 4.38h1.93v1.93h-1.93zM56.12 4.38h1.93v1.93h-1.93zM11.00 6.26h1.93v1.93h-1.93zM14.76 6.26h5.69v1.93h-5.69zM22.28 6.26h1.93v1.93h-1.93zM27.92 6.26h1.93v1.93h-1.93zM31.68 6.26h3.81v1.93h-3.81zM39.20 6.26h1.93v1.93h-1.93zM44.84 6.26h1.93v1.93h-1.93zM48.60 6.26h5.69v1.93h-5.69zM56.12 6.26h1.93v1.93h-1.93zM11.00 8.14h1.93v1.93h-1.93zM14.76 8.14h5.69v1.93h-5.69zM22.28 8.14h1.93v1.93h-1.93zM27.92 8.14h5.69v1.93h-5.69zM37.32 8.14h1.93v1.93h-1.93zM44.84 8.14h1.93v1.93h-1.93zM48.60 8.14h5.69v1.93h-5.69zM56.12 8.14h1.93v1.93h-1.93zM11.00 10.02h1.93v1.93h-1.93zM14.76 10.02h5.69v1.93h-5.69zM22.28 10.02h1.93v1.93h-1.93zM26.04 10.02h1.93v1.93h-1.93zM29.80 10.02h3.81v1.93h-3.81zM35.44 10.02h7.57v1.93h-7.57zM44.84 10.02h1.93v1.93h-1.93zM48.60 10.02h5.69v1.93h-5.69zM56.12 10.02h1.93v1.93h-1.93zM11.00 11.90h1.93v1.93h-1.93zM22.28 11.90h1.93v1.93h-1.93zM29.80 11.90h3.81v1.93h-3.81zM37.32 11.90h3.81v1.93h-3.81zM44.84 11.90h1.93v1.93h-1.93zM56.12 11.90h1.93v1.93h-1.93zM11.00 13.78h13.21v1.93h-13.21zM26.04 13.78h1.93v1.93h-1.93zM29.80 13.78h1.93v1.93h-1.93zM33.56 13.78h1.93v1.93h-1.93zM37.32 13.78h1.93v1.93h-1.93zM41.08 13.78h1.93v1.93h-1.93zM44.84 13.78h13.21v1.93h-13.21zM29.80 15.66h9.45v1.93h-9.45zM11.00 17.54h1.93v1.93h-1.93zM14.76 17.54h1.93v1.93h-1.93zM18.52 17.54h1.93v1.93h-1.93zM22.28 17.54h1.93v1.93h-1.93zM29.80 17.54h1.93v1.93h-1.93zM35.44 17.54h1.93v1.93h-1.93zM48.60 17.54h1.93v1.93h-1.93zM54.24 17.54h1.93v1.93h-1.93zM12.88 19.42h3.81v1.93h-3.81zM18.52 19.42h3.81v1.93h-3.81zM29.80 19.42h3.81v1.93h-3.81zM41.08 19.42h1.93v1.93h-1.93zM44.84 19.42h1.93v1.93h-1.93zM56.12 19.42h1.93v1.93h-1.93zM16.64 21.30h7.57v1.93h-7.57zM26.04 21.30h3.81v1.93h-3.81zM31.68 21.30h1.93v1.93h-1.93zM42.96 21.30h5.69v1.93h-5.69zM52.36 21.30h5.69v1.93h-5.69zM18.52 23.18h3.81v1.93h-3.81zM24.16 23.18h3.81v1.93h-3.81zM29.80 23.18h1.93v1.93h-1.93zM35.44 23.18h7.57v1.93h-7.57zM44.84 23.18h1.93v1.93h-1.93zM54.24 23.18h1.93v1.93h-1.93zM12.88 25.06h1.93v1.93h-1.93zM16.64 25.06h1.93v1.93h-1.93zM20.40 25.06h3.81v1.93h-3.81zM37.32 25.06h1.93v1.93h-1.93zM41.08 25.06h1.93v1.93h-1.93zM44.84 25.06h3.81v1.93h-3.81zM50.48 25.06h1.93v1.93h-1.93zM56.12 25.06h1.93v1.93h-1.93zM14.76 26.94h1.93v1.93h-1.93zM24.16 26.94h9.45v1.93h-9.45zM41.08 26.94h5.69v1.93h-5.69zM50.48 26.94h1.93v1.93h-1.93zM56.12 26.94h1.93v1.93h-1.93zM11.00 28.82h1.93v1.93h-1.93zM16.64 28.82h1.93v1.93h-1.93zM20.40 28.82h5.69v1.93h-5.69zM27.92 28.82h1.93v1.93h-1.93zM35.44 28.82h1.93v1.93h-1.93zM42.96 28.82h1.93v1.93h-1.93zM46.72 28.82h1.93v1.93h-1.93zM52.36 28.82h5.69v1.93h-5.69zM12.88 30.70h1.93v1.93h-1.93zM16.64 30.70h5.69v1.93h-5.69zM24.16 30.70h1.93v1.93h-1.93zM27.92 30.70h5.69v1.93h-5.69zM41.08 30.70h5.69v1.93h-5.69zM50.48 30.70h1.93v1.93h-1.93zM54.24 30.70h1.93v1.93h-1.93zM11.00 32.58h1.93v1.93h-1.93zM14.76 32.58h1.93v1.93h-1.93zM18.52 32.58h1.93v1.93h-1.93zM22.28 32.58h3.81v1.93h-3.81zM29.80 32.58h1.93v1.93h-1.93zM33.56 32.58h1.93v1.93h-1.93zM41.08 32.58h11.33v1.93h-11.33zM26.04 34.46h3.81v1.93h-3.81zM31.68 34.46h5.69v1.93h-5.69zM41.08 34.46h1.93v1.93h-1.93zM48.60 34.46h9.45v1.93h-9.45zM11.00 36.34h13.21v1.93h-13.21zM31.68 36.34h3.81v1.93h-3.81zM37.32 36.34h5.69v1.93h-5.69zM44.84 36.34h1.93v1.93h-1.93zM48.60 36.34h1.93v1.93h-1.93zM54.24 36.34h3.81v1.93h-3.81zM11.00 38.22h1.93v1.93h-1.93zM22.28 38.22h1.93v1.93h-1.93zM29.80 38.22h1.93v1.93h-1.93zM33.56 38.22h5.69v1.93h-5.69zM41.08 38.22h1.93v1.93h-1.93zM48.60 38.22h3.81v1.93h-3.81zM56.12 38.22h1.93v1.93h-1.93zM11.00 40.10h1.93v1.93h-1.93zM14.76 40.10h5.69v1.93h-5.69zM22.28 40.10h1.93v1.93h-1.93zM26.04 40.10h7.57v1.93h-7.57zM37.32 40.10h1.93v1.93h-1.93zM41.08 40.10h9.45v1.93h-9.45zM56.12 40.10h1.93v1.93h-1.93zM11.00 41.98h1.93v1.93h-1.93zM14.76 41.98h5.69v1.93h-5.69zM22.28 41.98h1.93v1.93h-1.93zM27.92 41.98h5.69v1.93h-5.69zM37.32 41.98h5.69v1.93h-5.69zM48.60 41.98h1.93v1.93h-1.93zM52.36 41.98h1.93v1.93h-1.93zM11.00 43.86h1.93v1.93h-1.93zM14.76 43.86h5.69v1.93h-5.69zM22.28 43.86h1.93v1.93h-1.93zM26.04 43.86h5.69v1.93h-5.69zM35.44 43.86h1.93v1.93h-1.93zM41.08 43.86h1.93v1.93h-1.93zM46.72 43.86h5.69v1.93h-5.69zM56.12 43.86h1.93v1.93h-1.93zM11.00 45.74h1.93v1.93h-1.93zM22.28 45.74h1.93v1.93h-1.93zM27.92 45.74h1.93v1.93h-1.93zM31.68 45.74h1.93v1.93h-1.93zM41.08 45.74h3.81v1.93h-3.81zM48.60 45.74h3.81v1.93h-3.81zM54.24 45.74h1.93v1.93h-1.93zM11.00 47.62h13.21v1.93h-13.21zM26.04 47.62h1.93v1.93h-1.93zM29.80 47.62h1.93v1.93h-1.93zM33.56 47.62h1.93v1.93h-1.93zM39.20 47.62h9.45v1.93h-9.45zM54.24 47.62h3.81v1.93h-3.81z" fill="#000"/><rect x=".5" y=".5" width="68" height="51" fill="none" stroke="#9a9a9a"/></svg>
<div style="left:879.5px;top:96px;width:7px;height:10px;background:#e8eef0;border:1px solid #44555c"></div>
<div style="left:879.5px;top:141px;width:7px;height:10px;background:#e8eef0;border:1px solid #44555c"></div>
<div style="left:879.5px;top:186px;width:7px;height:10px;background:#e8eef0;border:1px solid #44555c"></div>
<div style="left:1182.5px;top:96px;width:7px;height:10px;background:#e8eef0;border:1px solid #44555c"></div>
<div style="left:1182.5px;top:141px;width:7px;height:10px;background:#e8eef0;border:1px solid #44555c"></div>
<div style="left:1182.5px;top:186px;width:7px;height:10px;background:#e8eef0;border:1px solid #44555c"></div>
</div><div id="ov" class="abs" style="position:absolute;left:20px;top:12px;width:1560px;height:975px">
<svg style="left:0;top:0" width="1560" height="975"><g fill="none" stroke="#e3524b" stroke-width="1"><path d="M711 36.5H1034.5V72.5H1123.6V57"/><path d="M1439.6 30V198"/><path d="M1185 163H1499L1523 153"/></g></svg>
<div class="menu" style="left:371px;top:15px;width:340px;height:195px;background:#e4e6e2">
<div class="t" style="left:16.5px;top:18px;font-size:14.5px;letter-spacing:0.12px;word-spacing:0px">打开工程</div>
<div class="sep" style="left:16px;top:36px;width:309px"></div>
<div class="t" style="left:16.5px;top:55px;font-size:14.5px;letter-spacing:0.12px;word-spacing:0px">打开动画图片（<span style="letter-spacing:-.3px">GIF,HEIC,WebP,APNG...</span>）</div>
<div class="t" style="left:16.5px;top:79.5px;font-size:14.5px;letter-spacing:0.12px;word-spacing:0px">打开视频</div>
<div class="t" style="left:16.5px;top:104px;font-size:14.5px;letter-spacing:0.12px;word-spacing:0px">打开静态图片</div>
<div class="sep" style="left:16px;top:121.5px;width:309px"></div>
<div class="t" style="left:16.5px;top:141px;font-size:14.5px;letter-spacing:0.12px;word-spacing:0px">打开动画示例</div>
<svg style="left:316.5px;top:135px" width="7" height="12"><path d="M1 1L6 6L1 11" fill="none" stroke="#2a2a2a" stroke-width="2" stroke-linecap="round" stroke-linejoin="round"/></svg>
<div class="sep" style="left:16px;top:158px;width:309px"></div>
<div class="t" style="left:16.5px;top:177.5px;font-size:14.5px;letter-spacing:0.12px;word-spacing:0px">打开最近的</div>
<svg style="left:316.5px;top:171.5px" width="7" height="12"><path d="M1 1L6 6L1 11" fill="none" stroke="#2a2a2a" stroke-width="2" stroke-linecap="round" stroke-linejoin="round"/></svg>
</div>
<div class="menu" style="left:882.5px;top:95.5px;width:302.5px;height:255px;background:#dedce3">
<div class="t" style="left:16px;top:18.5px;font-size:14.5px;letter-spacing:0.2px;word-spacing:0px">我的网站主页<span style="margin-left:3px"></span>Banner1 (1200 x 560)</div>
<div class="t" style="left:16px;top:43px;font-size:14.5px;letter-spacing:0.2px;word-spacing:0px">我的网站主页<span style="margin-left:3px"></span>Banner2 (1200 x 360)</div>
<div class="t" style="left:16px;top:67.5px;font-size:14.5px;letter-spacing:0.2px;word-spacing:0px">工作室<span style="margin-left:3px"></span>Logo (88 x 31)</div>
<div class="t" style="left:16px;top:92px;font-size:14.5px;letter-spacing:0.2px;word-spacing:0px"><span style="letter-spacing:1.2px">"</span>正方形弹出式<span style="letter-spacing:1.2px">"</span>广告&nbsp;&nbsp;<span style="margin-left:2.5px"></span>(250 x 250)</div>
<div class="t" style="left:16px;top:116.5px;font-size:14.5px;letter-spacing:0.2px;word-spacing:0px">App Banner 1 (640 x 240)</div>
<div class="t" style="left:16px;top:141px;font-size:14.5px;letter-spacing:0.2px;word-spacing:0px">App Banner 2 (720 x 300)</div>
<div class="sep" style="left:15.5px;top:158.5px;width:272px"></div>
<div class="t" style="left:16px;top:177.5px;font-size:14.5px;letter-spacing:0.2px;word-spacing:0px">常规尺寸</div>
<svg style="left:279px;top:171.5px" width="7" height="12"><path d="M1 1L6 6L1 11" fill="none" stroke="#2a2a2a" stroke-width="2" stroke-linecap="round" stroke-linejoin="round"/></svg>
<div class="t" style="left:16px;top:202px;font-size:14.5px;letter-spacing:0.2px;word-spacing:0px"><span style="letter-spacing:.7px">AdMob</span><span style="margin-left:1px"></span>尺寸</div>
<svg style="left:279px;top:196px" width="7" height="12"><path d="M1 1L6 6L1 11" fill="none" stroke="#2a2a2a" stroke-width="2" stroke-linecap="round" stroke-linejoin="round"/></svg>
<div class="sep" style="left:15.5px;top:219.5px;width:272px"></div>
<div class="t" style="left:16px;top:238.5px;font-size:14.5px;letter-spacing:0.2px;word-spacing:0px">管理</div>
</div>
<div class="menu" style="left:1434.5px;top:196.5px;width:130px;height:194.5px;background:#e3e3e6">
<div class="t" style="left:16px;top:17.5px;font-size:14.5px;letter-spacing:-0.1px;word-spacing:0px">生成动画<span style="margin-left:1.5px"></span><span style="display:inline-block;font-size:14.8px;letter-spacing:0;transform:scaleX(.9);transform-origin:0 50%">GIF</span></div>
<div class="t" style="left:16px;top:42px;font-size:14.5px;letter-spacing:-0.1px;word-spacing:0px">生成动画<span style="margin-left:1.5px"></span><span style="display:inline-block;font-size:14.8px;letter-spacing:0;transform:scaleX(.9);transform-origin:0 50%">HEIC</span></div>
<div class="t" style="left:16px;top:66.5px;font-size:14.5px;letter-spacing:-0.1px;word-spacing:0px">生成动画<span style="margin-left:1.5px"></span><span style="display:inline-block;font-size:14.8px;letter-spacing:0;transform:scaleX(.9);transform-origin:0 50%">WebP</span></div>
<div class="t" style="left:16px;top:91px;font-size:14.5px;letter-spacing:-0.1px;word-spacing:0px">生成动画<span style="margin-left:1.5px"></span><span style="display:inline-block;font-size:14.8px;letter-spacing:0;transform:scaleX(.9);transform-origin:0 50%">PNG</span></div>
<div class="t" style="left:16px;top:115.5px;font-size:14.5px;letter-spacing:-0.1px;word-spacing:0px">生成动画<span style="margin-left:1.5px"></span><span style="display:inline-block;font-size:14.8px;letter-spacing:0;transform:scaleX(.9);transform-origin:0 50%">AVIF</span></div>
<div class="sep" style="left:15.5px;top:133px;width:98.5px"></div>
<div class="t" style="left:16px;top:152px;font-size:14.5px;letter-spacing:-0.1px;word-spacing:0px">生成视频</div>
<div class="t" style="left:16px;top:176.5px;font-size:14.5px;letter-spacing:-0.1px;word-spacing:0px">生成帧图片</div>
</div>
<div class="menu" style="left:26.5px;top:554.5px;width:109px;height:136px;background:#f3f3f3">
<div class="t" style="left:24px;top:15px;font-size:15.5px;letter-spacing:0px;word-spacing:0px">背景图层</div>
<div class="t" style="left:24px;top:36px;font-size:15.5px;letter-spacing:0px;word-spacing:0px">文字</div>
<div class="t" style="left:24px;top:57px;font-size:15.5px;letter-spacing:0px;word-spacing:0px">平铺文字</div>
<div class="t" style="left:24px;top:78.5px;font-size:15.5px;letter-spacing:0px;word-spacing:0px">图像</div>
<div class="t" style="left:24px;top:99.5px;font-size:15.5px;letter-spacing:0px;word-spacing:0px">平铺图像</div>
<div class="t" style="left:24px;top:121px;font-size:15.5px;letter-spacing:0px;word-spacing:0px">二维码</div>
</div>
<div class="menu" style="left:632.5px;top:700px;width:170px;height:182px;background:#f4f4f4">
<div class="t" style="left:23.5px;top:13.2px;font-size:15px;letter-spacing:0.72px;word-spacing:-2px">0.00 秒 (0 ms)</div>
<div class="t" style="left:23.5px;top:34.2px;font-size:15px;letter-spacing:0.72px;word-spacing:-2px">0.10 秒 (100 ms)</div>
<div class="t" style="left:23.5px;top:55.2px;font-size:15px;letter-spacing:0.72px;word-spacing:-2px">0.20 秒 (200 ms)</div>
<div class="t" style="left:23.5px;top:76.2px;font-size:15px;letter-spacing:0.72px;word-spacing:-2px">0.50 秒 (500 ms)</div>
<div class="t" style="left:23.5px;top:97.7px;font-size:15px;letter-spacing:0.72px;word-spacing:-2px">1.00 秒 (1000 ms)</div>
<div class="sep" style="left:0px;top:115px;width:170px"></div>
<div class="t" style="left:23.5px;top:132.5px;font-size:15px;letter-spacing:0.72px;word-spacing:-2px">管理</div>
<div class="sep" style="left:0px;top:150px;width:170px"></div>
<div class="t" style="left:23.5px;top:166.2px;font-size:15px;letter-spacing:0.72px;word-spacing:-2px">0.04 秒 (40 ms)</div>
<svg style="left:7px;top:160.2px" width="11" height="11"><path d="M1 6L4 9.6L10 1" fill="none" stroke="#222" stroke-width="1.7" stroke-linecap="round" stroke-linejoin="round"/></svg>
</div>
<div class="menu" style="left:932.5px;top:579.5px;width:167.5px;height:252.5px;background:#f4f4f4">
<div class="t" style="left:23.5px;top:15px;font-size:15.5px;letter-spacing:0px;word-spacing:0px">添加空白帧</div>
<div class="t" style="left:23.5px;top:36.5px;font-size:15.5px;letter-spacing:0px;word-spacing:0px">添加图片作为帧</div>
<div class="sep" style="left:0px;top:54px;width:167.5px"></div>
<div class="t" style="left:23.5px;top:71px;font-size:15.5px;letter-spacing:0px;word-spacing:0px">复制</div>
<div class="t" style="left:23.5px;top:92px;font-size:15.5px;letter-spacing:0px;word-spacing:0px">粘贴</div>
<div class="sep" style="left:0px;top:109px;width:167.5px"></div>
<div class="t" style="left:23.5px;top:126.5px;font-size:15.5px;letter-spacing:0px;word-spacing:0px">全选</div>
<div class="t" style="left:23.5px;top:147.5px;font-size:15.5px;letter-spacing:0px;word-spacing:0px">取消选择</div>
<div class="t" style="left:23.5px;top:168.5px;font-size:15.5px;letter-spacing:0px;word-spacing:0px">反向选择</div>
<div class="sep" style="left:0px;top:185.5px;width:167.5px"></div>
<div class="t" style="left:23.5px;top:202.5px;font-size:15.5px;letter-spacing:0px;word-spacing:0px">移除选择项</div>
<div class="sep" style="left:0px;top:220.5px;width:167.5px"></div>
<div class="t" style="left:23.5px;top:237px;font-size:15.5px;letter-spacing:0px;word-spacing:0px">移动帧顺序</div>
<svg style="left:143.5px;top:232px" width="9" height="10"><path d="M0 0L9 5L0 10z" fill="#333"/></svg>
</div>
<div class="menu" style="left:114px;top:723px;width:140px;height:198.5px;background:#f4f4f4;border-radius:6px">
<div style="position:absolute;left:0;top:2px;width:140px;height:19.5px;background:#1c54d8"></div>
<svg style="left:7px;top:6.5px" width="11" height="11"><path d="M1 6L4 9.6L10 1" fill="none" stroke="#fff" stroke-width="1.8" stroke-linecap="round" stroke-linejoin="round"/></svg>
<div class="t" style="left:23.5px;top:11.5px;font-size:14.5px;color:#fff;letter-spacing:.4px">一直循环</div>
<div class="t" style="left:23.5px;top:31px;font-size:14.5px;letter-spacing:.4px;word-spacing:-1.2px">1 次</div>
<div class="t" style="left:23.5px;top:51px;font-size:14.5px;letter-spacing:.4px;word-spacing:-1.2px">2 次</div>
<div class="t" style="left:23.5px;top:71px;font-size:14.5px;letter-spacing:.4px;word-spacing:-1.2px">5 次</div>
<div class="t" style="left:23.5px;top:91px;font-size:14.5px;letter-spacing:.4px;word-spacing:-1.2px">4 次</div>
<div class="t" style="left:23.5px;top:111px;font-size:14.5px;letter-spacing:.4px;word-spacing:-1.2px">7 次</div>
<div class="t" style="left:23.5px;top:131px;font-size:14.5px;letter-spacing:.4px;word-spacing:-1.2px">9 次</div>
<div class="t" style="left:23.5px;top:151px;font-size:14.5px;letter-spacing:.4px;word-spacing:-1.2px">66 次</div>
<div class="sep" style="left:0;top:168.5px;width:140px"></div>
<div class="t" style="left:23.5px;top:183.5px;font-size:14.5px">管理</div></div>
<svg style="left:559px;top:248px;filter:drop-shadow(1.5px 2px 1.2px rgba(30,30,0,.7))" width="1" height="1"><use href="#arw" fill="#fdf5a4" stroke="rgba(85,80,25,.65)" stroke-width=".6" transform="rotate(0) scale(1)"/></svg>
<svg style="left:915px;top:378px;filter:drop-shadow(1.5px 2px 1.2px rgba(30,30,0,.7))" width="1" height="1"><use href="#arw" fill="#fdf5a4" stroke="rgba(85,80,25,.65)" stroke-width=".6" transform="rotate(65.5) scale(1)"/></svg>
<svg style="left:881px;top:548px;filter:drop-shadow(1.5px 2px 1.2px rgba(30,30,0,.7))" width="1" height="1"><use href="#arw" fill="#fdf5a4" stroke="rgba(85,80,25,.65)" stroke-width=".6" transform="rotate(134) scale(1)"/></svg>
<svg style="left:266px;top:528px;filter:drop-shadow(1.5px 2px 1.2px rgba(30,30,0,.7))" width="1" height="1"><use href="#arw" fill="#fdf5a4" stroke="rgba(85,80,25,.65)" stroke-width=".6" transform="rotate(230.4) scale(1)"/></svg>
<svg style="left:367px;top:609.5px;filter:drop-shadow(1.5px 2px 1.2px rgba(30,30,0,.7))" width="1" height="1"><use href="#arw" fill="#fdf5a4" stroke="rgba(85,80,25,.65)" stroke-width=".6" transform="rotate(218.2) scale(1)"/></svg>
<svg style="left:624px;top:591.5px;filter:drop-shadow(1.5px 2px 1.2px rgba(30,30,0,.7))" width="1" height="1"><use href="#arw" fill="#fdf5a4" stroke="rgba(85,80,25,.65)" stroke-width=".6" transform="rotate(166) scale(0.97)"/></svg>
<svg style="left:1428.3px;top:549.8px;filter:drop-shadow(1.5px 2px 1.2px rgba(30,30,0,.7))" width="1" height="1"><use href="#arws" fill="#fdf5a4" stroke="rgba(85,80,25,.65)" stroke-width=".6" transform="rotate(0) scale(1)"/></svg>
<div class="note" style="left:371px;top:372px;width:419px;height:75px;font-size:37px;line-height:75px;letter-spacing:6px;padding-left:2px">更多操作的菜单</div>
<div class="note" style="left:1264px;top:631.5px;width:272px;height:67px;font-size:35px;line-height:76px;letter-spacing:5.2px;padding-left:4px;overflow:hidden">输出参数区域</div>
</div></body></html>
